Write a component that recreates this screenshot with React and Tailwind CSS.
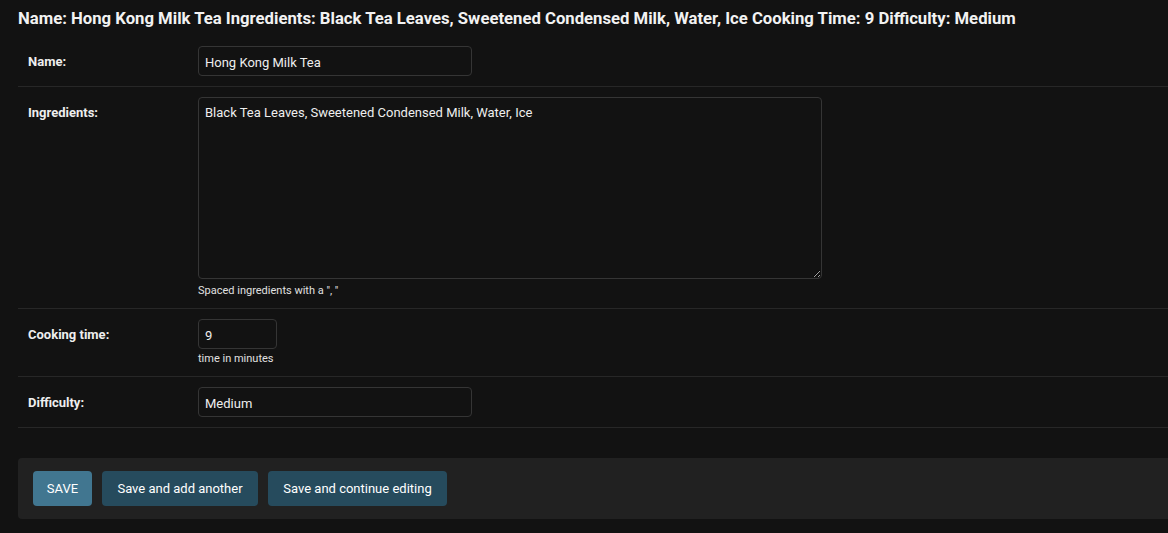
const font = { fontFamily: "Roboto, 'Noto Sans', sans-serif" };

const FormRow = ({ label, children }) => {
  return (
    <div className="flex border-b border-[#272727] p-[10px]">
      <label className="w-[170px] shrink-0 pt-[7px] text-[13px] leading-[18px] font-bold text-[#eeeeee]">
        {label}
      </label>
      <div className="flex flex-col">{children}</div>
    </div>
  );
};

const inputClass =
  "h-[30px] rounded-[4px] border border-[#353535] bg-[#121212] px-[6px] pt-[2px] text-[13px] text-[#eeeeee] outline-none";

export default function App() {
  return (
    <div
      className="min-h-screen bg-[#121212] pl-[18px] pb-[20px] [color-scheme:dark]"
      style={font}
    >
      <h2 className="pt-[9px] pb-[7px] text-[16.7px] leading-[20px] font-bold text-[#f2f2f2]">
        Name: Hong Kong Milk Tea Ingredients: Black Tea Leaves, Sweetened
        Condensed Milk, Water, Ice Cooking Time: 9 Difficulty: Medium
      </h2>

      <form>
        <FormRow label="Name:">
          <input
            type="text"
            defaultValue="Hong Kong Milk Tea"
            className={`${inputClass} w-[274px]`}
          />
        </FormRow>

        <FormRow label="Ingredients:">
          <textarea
            defaultValue="Black Tea Leaves, Sweetened Condensed Milk, Water, Ice"
            className="block h-[182px] w-[624px] rounded-[4px] border border-[#353535] bg-[#121212] px-[6px] pt-[6px] pb-[5px] text-[13px] leading-[18px] text-[#eeeeee] outline-none"
          />
          <div className="mt-[5px] text-[11px] leading-[14px] text-[#e0e0e0]">
            Spaced ingredients with a &quot;, &quot;
          </div>
        </FormRow>

        <FormRow label="Cooking time:">
          <input
            type="number"
            defaultValue="9"
            className={`${inputClass} w-[79px] [appearance:textfield] [&::-webkit-inner-spin-button]:appearance-none`}
          />
          <div className="mt-[3px] text-[11px] leading-[14px] text-[#e0e0e0]">
            time in minutes
          </div>
        </FormRow>

        <FormRow label="Difficulty:">
          <input
            type="text"
            defaultValue="Medium"
            className={`${inputClass} w-[274px]`}
          />
        </FormRow>

        <div className="mt-[30px] flex gap-[10px] rounded-l-[4px] bg-[#212121] px-[15px] py-[13px]">
          <button
            type="button"
            className="h-[35px] w-[59px] rounded-[4px] bg-[#417690] pt-[1px] text-[13px] text-white"
          >
            SAVE
          </button>
          <button
            type="button"
            className="h-[35px] w-[156px] rounded-[4px] bg-[#264b5d] pt-[1px] text-[13px] text-white"
          >
            Save and add another
          </button>
          <button
            type="button"
            className="h-[35px] w-[179px] rounded-[4px] bg-[#264b5d] pt-[1px] text-[13px] text-white"
          >
            Save and continue editing
          </button>
        </div>
      </form>
    </div>
  );
}
